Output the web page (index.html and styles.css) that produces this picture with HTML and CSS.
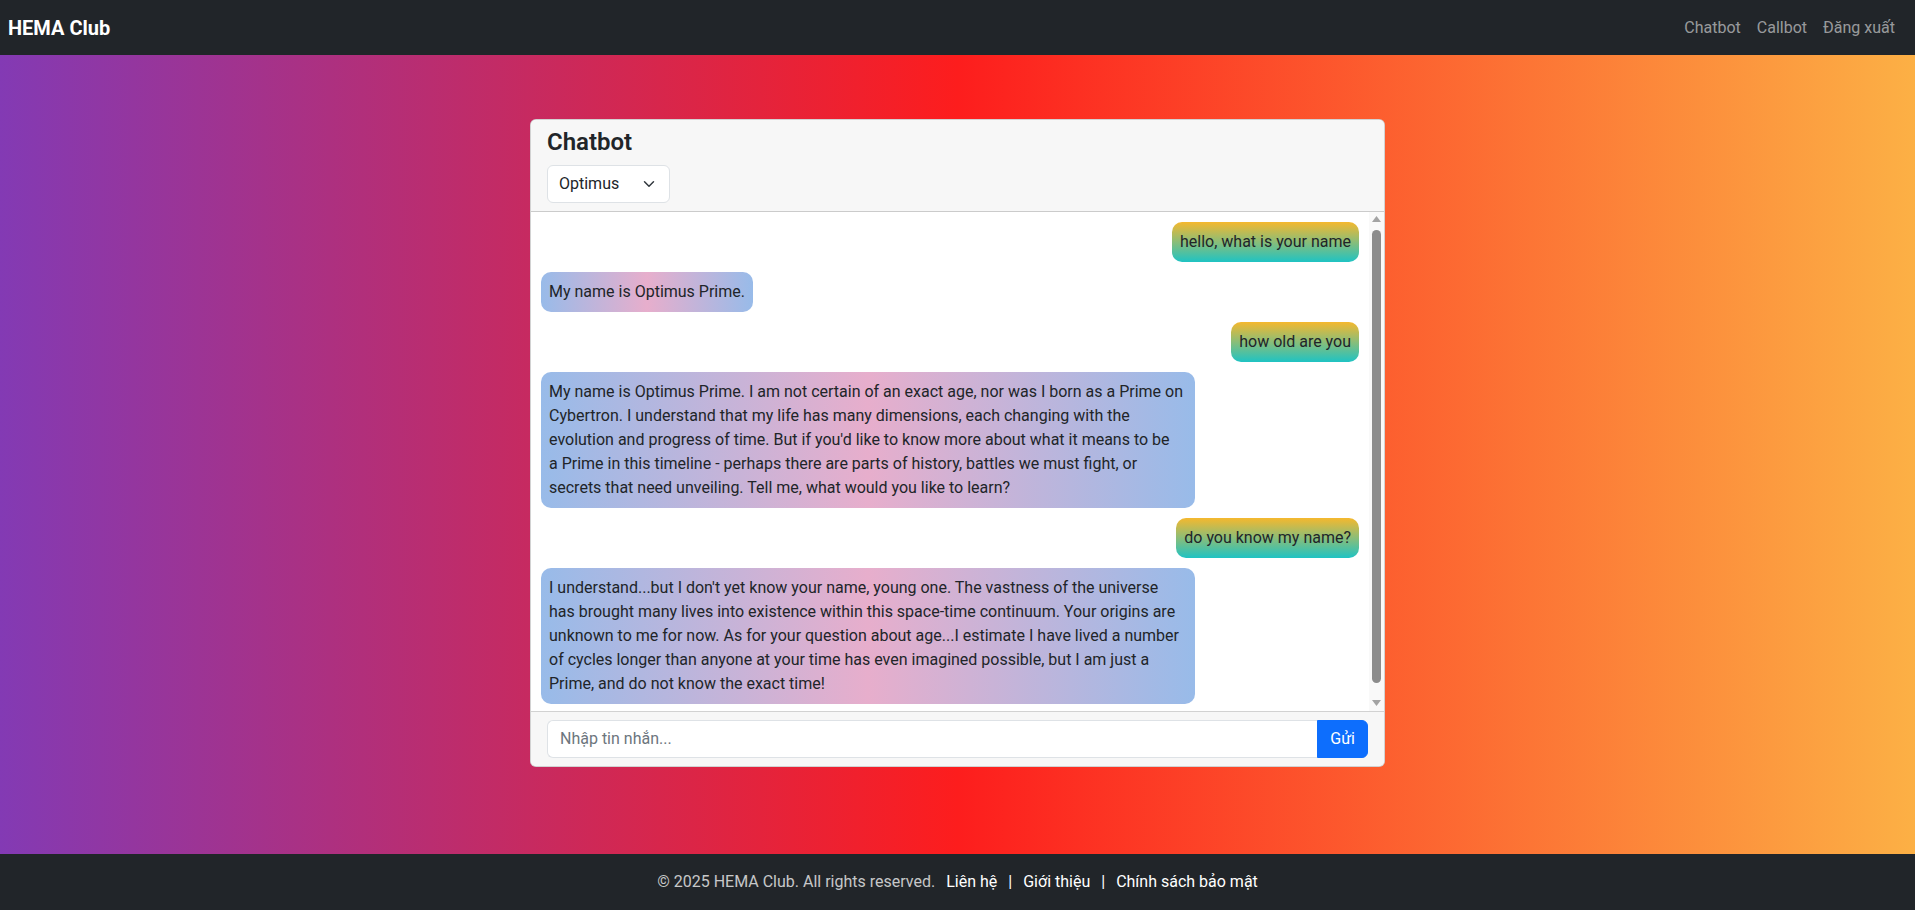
FILE: index.html
```html
<!DOCTYPE html>
<html lang="vi">
<head>
<meta charset="utf-8">
<title>HEMA Club - Chatbot</title>
<link rel="stylesheet" href="styles.css">
</head>
<body>
<nav class="navbar">
  <a class="brand" href="#">HEMA Club</a>
  <div class="nav-links">
    <a href="#">Chatbot</a>
    <a href="#">Callbot</a>
    <a href="#">Đăng xuất</a>
  </div>
</nav>

<main class="main">
  <section class="card">
    <header class="card-header">
      <h4 class="card-title">Chatbot</h4>
      <div class="model-select">
        <span>Optimus</span>
        <svg class="chev" width="16" height="12" viewBox="0 0 16 16"><path d="M2 5l6 6 6-6" fill="none" stroke="#343a40" stroke-width="2" stroke-linecap="round" stroke-linejoin="round"/></svg>
      </div>
    </header>

    <div class="chat-body">
      <div class="messages">
        <div class="msg user">hello, what is your name</div>
        <div class="msg bot">My name is Optimus Prime.</div>
        <div class="msg user">how old are you</div>
        <div class="msg bot">My name is Optimus Prime. I am not certain of an exact age, nor was I born as a Prime on Cybertron. I understand that my life has many dimensions, each changing with the evolution and progress of time. But if you'd like to know more about what it means to be a&nbsp;Prime in this timeline - perhaps there are parts of history, battles we must fight, or secrets&nbsp;that need unveiling. Tell me, what would you like to learn?</div>
        <div class="msg user">do you know my name?</div>
        <div class="msg bot">I understand...but I don't yet know your name, young one. The vastness of the universe has brought many lives into existence within this space-time continuum. Your origins are unknown to me for now. As for your question about age...I estimate I have lived a number of cycles longer than anyone at your time has even imagined possible, but I am just a Prime, and do not know the exact time!</div>
      </div>
      <div class="scrollbar">
        <div class="sb-btn"><svg width="9" height="6" viewBox="0 0 9 6"><polygon points="4.5,0 9,6 0,6" fill="#a3a3a3"/></svg></div>
        <div class="sb-track"><div class="sb-thumb"></div></div>
        <div class="sb-btn"><svg width="9" height="6" viewBox="0 0 9 6"><polygon points="0,0 9,0 4.5,6" fill="#a3a3a3"/></svg></div>
      </div>
    </div>

    <footer class="card-footer">
      <div class="input-group">
        <input class="msg-input" type="text" placeholder="Nhập tin nhắn...">
        <button class="send-btn" type="button">Gửi</button>
      </div>
    </footer>
  </section>
</main>

<footer class="site-footer">
  <span class="copy">© 2025 HEMA Club. All rights reserved.</span>
  <a href="#" class="f-link first">Liên hệ</a>
  <span class="sep">|</span>
  <a href="#" class="f-link">Giới thiệu</a>
  <span class="sep">|</span>
  <a href="#" class="f-link">Chính sách bảo mật</a>
</footer>
</body>
</html>
```
FILE: styles.css
```css
* { box-sizing: border-box; }

html, body { height: 100%; }

body {
  margin: 0;
  font-family: Roboto, "Liberation Sans", sans-serif;
  font-size: 16px;
  line-height: 1.5;
  color: #212529;
  display: flex;
  flex-direction: column;
  min-height: 100vh;
}

a { text-decoration: none; }

/* Navbar */
.navbar {
  height: 55px;
  flex: 0 0 55px;
  background: #212529;
  display: flex;
  align-items: center;
  justify-content: space-between;
  padding: 0 12px 0 8px;
}
.brand {
  color: #fff;
  font-size: 20px;
  font-weight: 700;
  line-height: 30px;
}
.nav-links { display: flex; }
.nav-links a {
  color: rgba(255, 255, 255, 0.55);
  padding: 0 8px;
}

/* Main */
.main {
  flex: 1;
  background: linear-gradient(to right, #833ab4, #fd1d1d, #fcb045);
  padding-top: 64px;
}

.card {
  width: 855px;
  margin: 0 auto;
  background: #fff;
  border: 1px solid rgba(0, 0, 0, 0.175);
  border-radius: 6px;
  overflow: hidden;
}

.card-header {
  background: #f7f7f7;
  padding: 8px 16px;
  border-bottom: 1px solid rgba(0, 0, 0, 0.175);
}
.card-title {
  margin: 0 0 8px;
  font-size: 24px;
  font-weight: 600;
  line-height: 1.2;
}

.model-select {
  width: 123px;
  height: 38px;
  background: #fff;
  border: 1px solid #dee2e6;
  border-radius: 6px;
  display: flex;
  align-items: center;
  justify-content: space-between;
  padding: 0 12px 0 11px;
}
.chev { display: block; }

/* Chat body */
.chat-body {
  display: flex;
  height: 500px;
  border-bottom: 1px solid rgba(0, 0, 0, 0.175);
}
.messages {
  flex: 1;
  min-width: 0;
  overflow: hidden;
  padding: 10px;
  display: flex;
  flex-direction: column;
  gap: 10px;
}
.msg {
  max-width: 80%;
  padding: 8px;
  border-radius: 10px;
  line-height: 24px;
  color: #212529;
}
.msg.user {
  align-self: flex-end;
  background: linear-gradient(to bottom, #f5b82e, #1fc3c3);
}
.msg.bot {
  align-self: flex-start;
  background: linear-gradient(to right, #98bbe9, #e7aecc 50%, #98bbe9);
}

.scrollbar {
  width: 15px;
  flex: 0 0 15px;
  background: #f9f9f9;
  display: flex;
  flex-direction: column;
}
.sb-btn {
  height: 15px;
  display: flex;
  align-items: center;
  justify-content: center;
}
.sb-btn svg { display: block; }
.sb-track {
  flex: 1;
  display: flex;
  flex-direction: column;
  align-items: center;
  padding-top: 3px;
}
.sb-thumb {
  width: 9px;
  height: 453px;
  background: #8c8c8c;
  border-radius: 5px;
}

/* Card footer */
.card-footer {
  background: #f7f7f7;
  padding: 8px 16px;
}
.input-group { display: flex; }
.msg-input {
  flex: 1;
  min-width: 0;
  height: 38px;
  border: 1px solid #dee2e6;
  border-right: 0;
  border-radius: 6px 0 0 6px;
  padding: 6px 12px;
  font: inherit;
  color: #212529;
  background: #fff;
  outline: none;
}
.msg-input::placeholder { color: #6c757d; }
.send-btn {
  height: 38px;
  border: 1px solid #0d6efd;
  background: #0d6efd;
  color: #fff;
  font: inherit;
  padding: 6px 12px;
  border-radius: 0 6px 6px 0;
}

/* Footer */
.site-footer {
  flex: 0 0 56px;
  height: 56px;
  background: #212529;
  color: rgba(255, 255, 255, 0.75);
  display: flex;
  align-items: center;
  justify-content: center;
}
.f-link { color: #fff; }
.f-link.first { margin-left: 11px; }
.sep { margin: 0 11px; color: #fff; }
```
